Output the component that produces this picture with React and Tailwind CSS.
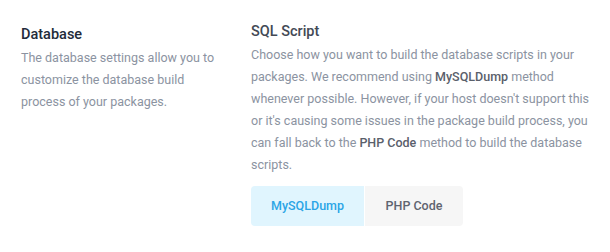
export default function App() {
  return (
    <div className="w-[610px] h-[252px] bg-white" style={{ fontFamily: 'Roboto, "Liberation Sans", sans-serif' }}>
      <div className="flex pl-[21px] pt-[21px]">
        <div className="w-[200px] shrink-0 pt-[3px]">
          <h2 className="text-[14.5px] leading-[22px] font-medium text-[#222b3a]">Database</h2>
          <p className="mt-[1px] text-[12.5px] leading-[22px] text-[#8b93a1]">
            The database settings allow you to customize the database build process of your packages.
          </p>
        </div>
        <div className="ml-[30px] w-[341px]">
          <h3 className="text-[14.5px] leading-[22px] font-medium text-[#434955]">SQL Script</h3>
          <p className="mt-[1px] text-[12.5px] leading-[22px] text-[#8b93a1]">
            Choose how you want to build the database scripts in your packages. We recommend using{" "}
            <span className="font-medium text-[#5a606b]">MySQLDump</span> method whenever possible. However, if your host doesn't support this or it's causing some issues in the package build process, you can fall back to the{" "}
            <span className="font-medium text-[#5a606b]">PHP Code</span> method to build the database scripts.
          </p>
          <div className="mt-[10px] flex h-[40px] w-fit overflow-hidden rounded-[4px] text-[12.5px] font-medium">
            <div className="flex w-[114px] items-center justify-center bg-[#e0f5fe] text-[#2ba5e6] border-r border-white">MySQLDump</div>
            <div className="flex w-[98px] items-center justify-center bg-[#f6f6f6] text-[#5f6470]">PHP Code</div>
          </div>
        </div>
      </div>
    </div>
  );
}
